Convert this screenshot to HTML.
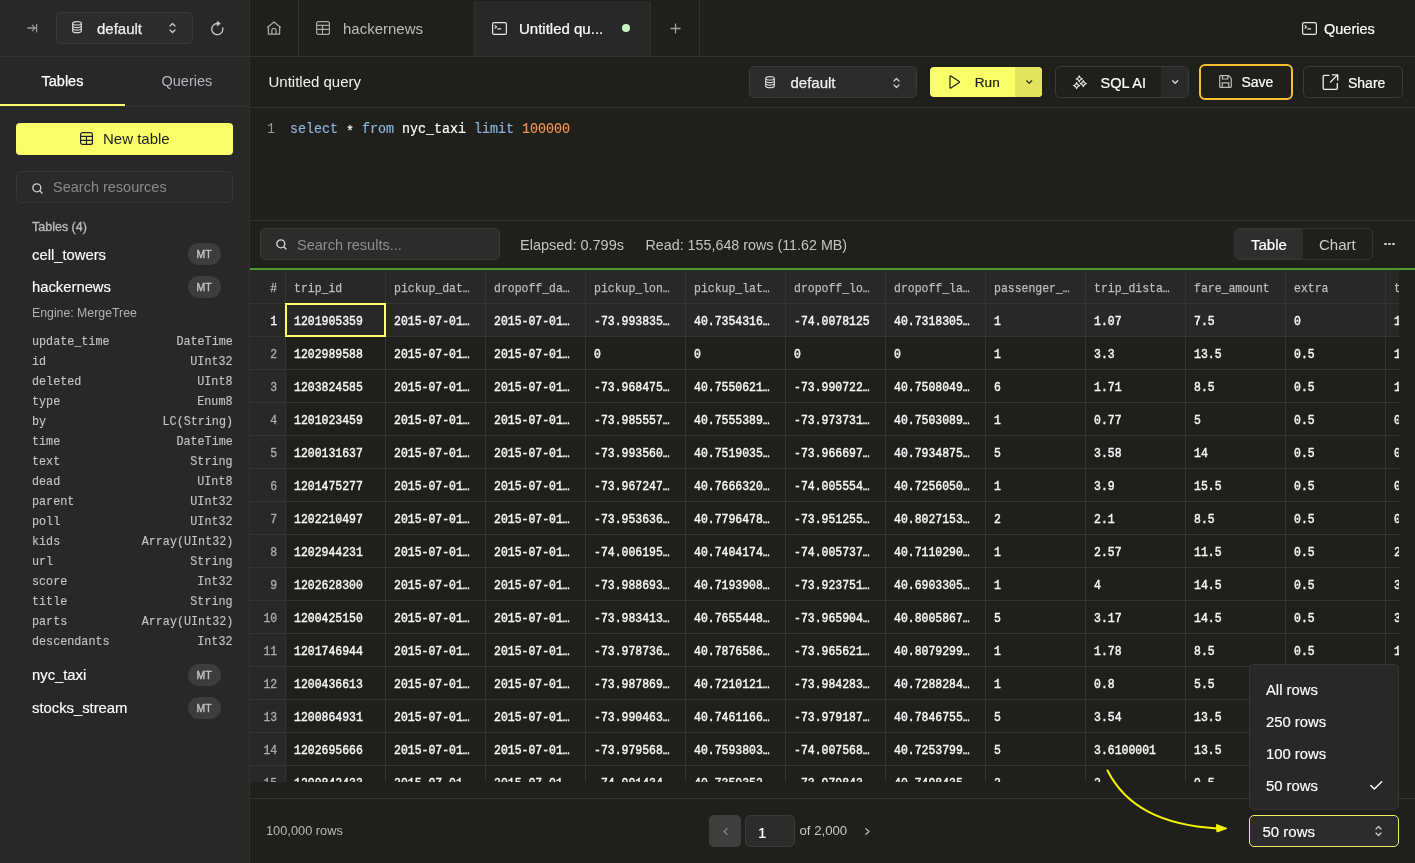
<!DOCTYPE html>
<html><head><meta charset="utf-8">
<style>
*{box-sizing:border-box;margin:0;padding:0}
html,body{width:1415px;height:863px;overflow:hidden;background:#1f1f1c;font-family:"Liberation Sans",sans-serif;color:#fff;position:relative}
.a{position:absolute}
.t{position:absolute;white-space:nowrap;line-height:1;-webkit-font-smoothing:antialiased}
svg{position:absolute;overflow:visible}
</style></head><body>
<div id="root" style="position:absolute;left:0;top:0;width:1415px;height:863px;overflow:hidden;background:#1f1f1c;will-change:transform">
<div class="a" style="left:0px;top:0px;width:250px;height:863px;background:#282828"></div><div class="a" style="left:249px;top:0px;width:1px;height:863px;background:#323232"></div><div class="a" style="left:0px;top:56px;width:249px;height:1px;background:#323232"></div><svg style="left:27px;top:24px;" width="11" height="9" viewBox="0 0 11 9" fill="none"><path d="M0.8 4H8" stroke="#9a9a9a" stroke-width="1.5" stroke-linecap="round"/><path d="M5.3 1.2L8.1 4L5.3 6.8M9.6 0.4V8" stroke="#9a9a9a" stroke-width="1.2" stroke-linecap="round" stroke-linejoin="round"/></svg><div class="a" style="left:56px;top:12px;width:137px;height:32px;background:#2c2c2c;border:1px solid #3a3a3a;border-radius:5px"></div><svg style="left:72px;top:21px;" width="10" height="12" viewBox="0 0 10 12" fill="none"><path d="M0.7 2.4C0.7 1.3 2.6 0.7 5 0.7C7.4 0.7 9.3 1.3 9.3 2.4V9.9C9.3 11 7.4 11.6 5 11.6C2.6 11.6 0.7 11 0.7 9.9Z" stroke="#d8d8d8" stroke-width="1.2"/><path d="M0.7 2.4C0.7 3.4 2.6 4 5 4C7.4 4 9.3 3.4 9.3 2.4M0.7 5C0.7 6 2.6 6.6 5 6.6C7.4 6.6 9.3 6 9.3 5M0.7 7.5C0.7 8.5 2.6 9.1 5 9.1C7.4 9.1 9.3 8.5 9.3 7.5" stroke="#d8d8d8" stroke-width="1.1"/></svg><div class="t" style="left:97px;top:21.25px;font-size:15px;color:#f0f0f0;font-weight:400;font-family:'Liberation Sans',sans-serif;-webkit-text-stroke:0.25px #f0f0f0;">default</div><svg style="left:168.5px;top:22px;" width="7" height="12" viewBox="0 0 7 12" fill="none"><path d="M1 4L3.5 1.5L6 4M1 8L3.5 10.5L6 8" stroke="#cfcfcf" stroke-width="1.2" stroke-linecap="round" stroke-linejoin="round"/></svg><svg style="left:211px;top:21px;" width="13" height="14" viewBox="0 0 13 14" fill="none"><path d="M11.8 7A5.6 5.6 0 1 1 6.6 2.5" stroke="#cfcfcf" stroke-width="1.3" stroke-linecap="round"/><path d="M6.3 0.2L9.3 2.6L6.3 5Z" fill="#cfcfcf" stroke="#cfcfcf" stroke-width="0.6" stroke-linejoin="round"/></svg><div class="t" style="left:41.5px;top:73.67px;font-size:14.5px;color:#ffffff;font-weight:400;font-family:'Liberation Sans',sans-serif;-webkit-text-stroke:0.25px #fff;">Tables</div><div class="t" style="left:161.5px;top:73.67px;font-size:14.5px;color:#b3b6bd;font-weight:400;font-family:'Liberation Sans',sans-serif;">Queries</div><div class="a" style="left:0px;top:106px;width:249px;height:1px;background:#323232"></div><div class="a" style="left:0px;top:104px;width:125px;height:2px;background:#faff69"></div><div class="a" style="left:16px;top:123px;width:217px;height:32px;background:#faff69;border-radius:4px"></div><svg style="left:80px;top:132px;" width="13" height="13" viewBox="0 0 13 13" fill="none"><rect x="0.6" y="0.6" width="11.8" height="11.8" rx="2" stroke="#1f1f1c" stroke-width="1.2"/><path d="M0.6 4.4H12.4M0.6 8.4H12.4M6.5 4.4V12.4" stroke="#1f1f1c" stroke-width="1.2"/></svg><div class="t" style="left:103px;top:131.25px;font-size:15px;color:#1f1f1c;font-weight:400;font-family:'Liberation Sans',sans-serif;">New table</div><div class="a" style="left:16px;top:171px;width:217px;height:32px;background:#2a2a2a;border:1px solid #363636;border-radius:5px"></div><svg style="left:31.5px;top:182.5px;" width="11" height="11" viewBox="0 0 11 11" fill="none"><circle cx="4.8" cy="4.8" r="4" stroke="#d0d0d0" stroke-width="1.3"/><path d="M7.8 7.8L10 10" stroke="#d0d0d0" stroke-width="1.3" stroke-linecap="round"/></svg><div class="t" style="left:53px;top:180.18px;font-size:14.5px;color:#8a8a8a;font-weight:400;font-family:'Liberation Sans',sans-serif;">Search resources</div><div class="t" style="left:32px;top:221.38px;font-size:12.5px;color:#b9b9b9;font-weight:400;font-family:'Liberation Sans',sans-serif;-webkit-text-stroke:0.35px #b9b9b9;">Tables (4)</div><div class="t" style="left:32px;top:247.92px;font-size:14.8px;color:#fff;font-weight:400;font-family:'Liberation Sans',sans-serif;-webkit-text-stroke:0.15px #fff;">cell_towers</div><div class="a" style="left:188px;top:243px;width:33px;height:22px;background:#3d3d3d;border-radius:11px"></div><div class="t" style="left:196.5px;top:249.07px;font-size:10.5px;color:#c4c4c4;font-weight:400;font-family:'Liberation Sans',sans-serif;-webkit-text-stroke:0.35px #c4c4c4;">MT</div><div class="t" style="left:32px;top:280.42px;font-size:14.8px;color:#fff;font-weight:400;font-family:'Liberation Sans',sans-serif;-webkit-text-stroke:0.15px #fff;">hackernews</div><div class="a" style="left:188px;top:276px;width:33px;height:22px;background:#3d3d3d;border-radius:11px"></div><div class="t" style="left:196.5px;top:282.07px;font-size:10.5px;color:#c4c4c4;font-weight:400;font-family:'Liberation Sans',sans-serif;-webkit-text-stroke:0.35px #c4c4c4;">MT</div><div class="t" style="left:32px;top:306.55px;font-size:12.3px;color:#b3b3b3;font-weight:400;font-family:'Liberation Sans',sans-serif;">Engine: MergeTree</div><div class="t" style="left:32px;transform-origin:left top;top:334.74px;font-size:13.5px;color:#c4c4c4;font-family:'Liberation Mono',monospace;font-weight:400;transform:scaleX(0.87);-webkit-text-stroke:0.15px #c4c4c4;">update_time</div><div class="t" style="right:1182px;transform-origin:right top;top:334.74px;font-size:13.5px;color:#c4c4c4;font-family:'Liberation Mono',monospace;font-weight:400;transform:scaleX(0.87);-webkit-text-stroke:0.15px #c4c4c4;">DateTime</div><div class="t" style="left:32px;transform-origin:left top;top:354.74px;font-size:13.5px;color:#c4c4c4;font-family:'Liberation Mono',monospace;font-weight:400;transform:scaleX(0.87);-webkit-text-stroke:0.15px #c4c4c4;">id</div><div class="t" style="right:1182px;transform-origin:right top;top:354.74px;font-size:13.5px;color:#c4c4c4;font-family:'Liberation Mono',monospace;font-weight:400;transform:scaleX(0.87);-webkit-text-stroke:0.15px #c4c4c4;">UInt32</div><div class="t" style="left:32px;transform-origin:left top;top:374.74px;font-size:13.5px;color:#c4c4c4;font-family:'Liberation Mono',monospace;font-weight:400;transform:scaleX(0.87);-webkit-text-stroke:0.15px #c4c4c4;">deleted</div><div class="t" style="right:1182px;transform-origin:right top;top:374.74px;font-size:13.5px;color:#c4c4c4;font-family:'Liberation Mono',monospace;font-weight:400;transform:scaleX(0.87);-webkit-text-stroke:0.15px #c4c4c4;">UInt8</div><div class="t" style="left:32px;transform-origin:left top;top:394.74px;font-size:13.5px;color:#c4c4c4;font-family:'Liberation Mono',monospace;font-weight:400;transform:scaleX(0.87);-webkit-text-stroke:0.15px #c4c4c4;">type</div><div class="t" style="right:1182px;transform-origin:right top;top:394.74px;font-size:13.5px;color:#c4c4c4;font-family:'Liberation Mono',monospace;font-weight:400;transform:scaleX(0.87);-webkit-text-stroke:0.15px #c4c4c4;">Enum8</div><div class="t" style="left:32px;transform-origin:left top;top:414.74px;font-size:13.5px;color:#c4c4c4;font-family:'Liberation Mono',monospace;font-weight:400;transform:scaleX(0.87);-webkit-text-stroke:0.15px #c4c4c4;">by</div><div class="t" style="right:1182px;transform-origin:right top;top:414.74px;font-size:13.5px;color:#c4c4c4;font-family:'Liberation Mono',monospace;font-weight:400;transform:scaleX(0.87);-webkit-text-stroke:0.15px #c4c4c4;">LC(String)</div><div class="t" style="left:32px;transform-origin:left top;top:434.74px;font-size:13.5px;color:#c4c4c4;font-family:'Liberation Mono',monospace;font-weight:400;transform:scaleX(0.87);-webkit-text-stroke:0.15px #c4c4c4;">time</div><div class="t" style="right:1182px;transform-origin:right top;top:434.74px;font-size:13.5px;color:#c4c4c4;font-family:'Liberation Mono',monospace;font-weight:400;transform:scaleX(0.87);-webkit-text-stroke:0.15px #c4c4c4;">DateTime</div><div class="t" style="left:32px;transform-origin:left top;top:454.74px;font-size:13.5px;color:#c4c4c4;font-family:'Liberation Mono',monospace;font-weight:400;transform:scaleX(0.87);-webkit-text-stroke:0.15px #c4c4c4;">text</div><div class="t" style="right:1182px;transform-origin:right top;top:454.74px;font-size:13.5px;color:#c4c4c4;font-family:'Liberation Mono',monospace;font-weight:400;transform:scaleX(0.87);-webkit-text-stroke:0.15px #c4c4c4;">String</div><div class="t" style="left:32px;transform-origin:left top;top:474.74px;font-size:13.5px;color:#c4c4c4;font-family:'Liberation Mono',monospace;font-weight:400;transform:scaleX(0.87);-webkit-text-stroke:0.15px #c4c4c4;">dead</div><div class="t" style="right:1182px;transform-origin:right top;top:474.74px;font-size:13.5px;color:#c4c4c4;font-family:'Liberation Mono',monospace;font-weight:400;transform:scaleX(0.87);-webkit-text-stroke:0.15px #c4c4c4;">UInt8</div><div class="t" style="left:32px;transform-origin:left top;top:494.74px;font-size:13.5px;color:#c4c4c4;font-family:'Liberation Mono',monospace;font-weight:400;transform:scaleX(0.87);-webkit-text-stroke:0.15px #c4c4c4;">parent</div><div class="t" style="right:1182px;transform-origin:right top;top:494.74px;font-size:13.5px;color:#c4c4c4;font-family:'Liberation Mono',monospace;font-weight:400;transform:scaleX(0.87);-webkit-text-stroke:0.15px #c4c4c4;">UInt32</div><div class="t" style="left:32px;transform-origin:left top;top:514.74px;font-size:13.5px;color:#c4c4c4;font-family:'Liberation Mono',monospace;font-weight:400;transform:scaleX(0.87);-webkit-text-stroke:0.15px #c4c4c4;">poll</div><div class="t" style="right:1182px;transform-origin:right top;top:514.74px;font-size:13.5px;color:#c4c4c4;font-family:'Liberation Mono',monospace;font-weight:400;transform:scaleX(0.87);-webkit-text-stroke:0.15px #c4c4c4;">UInt32</div><div class="t" style="left:32px;transform-origin:left top;top:534.74px;font-size:13.5px;color:#c4c4c4;font-family:'Liberation Mono',monospace;font-weight:400;transform:scaleX(0.87);-webkit-text-stroke:0.15px #c4c4c4;">kids</div><div class="t" style="right:1182px;transform-origin:right top;top:534.74px;font-size:13.5px;color:#c4c4c4;font-family:'Liberation Mono',monospace;font-weight:400;transform:scaleX(0.87);-webkit-text-stroke:0.15px #c4c4c4;">Array(UInt32)</div><div class="t" style="left:32px;transform-origin:left top;top:554.74px;font-size:13.5px;color:#c4c4c4;font-family:'Liberation Mono',monospace;font-weight:400;transform:scaleX(0.87);-webkit-text-stroke:0.15px #c4c4c4;">url</div><div class="t" style="right:1182px;transform-origin:right top;top:554.74px;font-size:13.5px;color:#c4c4c4;font-family:'Liberation Mono',monospace;font-weight:400;transform:scaleX(0.87);-webkit-text-stroke:0.15px #c4c4c4;">String</div><div class="t" style="left:32px;transform-origin:left top;top:574.74px;font-size:13.5px;color:#c4c4c4;font-family:'Liberation Mono',monospace;font-weight:400;transform:scaleX(0.87);-webkit-text-stroke:0.15px #c4c4c4;">score</div><div class="t" style="right:1182px;transform-origin:right top;top:574.74px;font-size:13.5px;color:#c4c4c4;font-family:'Liberation Mono',monospace;font-weight:400;transform:scaleX(0.87);-webkit-text-stroke:0.15px #c4c4c4;">Int32</div><div class="t" style="left:32px;transform-origin:left top;top:594.74px;font-size:13.5px;color:#c4c4c4;font-family:'Liberation Mono',monospace;font-weight:400;transform:scaleX(0.87);-webkit-text-stroke:0.15px #c4c4c4;">title</div><div class="t" style="right:1182px;transform-origin:right top;top:594.74px;font-size:13.5px;color:#c4c4c4;font-family:'Liberation Mono',monospace;font-weight:400;transform:scaleX(0.87);-webkit-text-stroke:0.15px #c4c4c4;">String</div><div class="t" style="left:32px;transform-origin:left top;top:614.74px;font-size:13.5px;color:#c4c4c4;font-family:'Liberation Mono',monospace;font-weight:400;transform:scaleX(0.87);-webkit-text-stroke:0.15px #c4c4c4;">parts</div><div class="t" style="right:1182px;transform-origin:right top;top:614.74px;font-size:13.5px;color:#c4c4c4;font-family:'Liberation Mono',monospace;font-weight:400;transform:scaleX(0.87);-webkit-text-stroke:0.15px #c4c4c4;">Array(UInt32)</div><div class="t" style="left:32px;transform-origin:left top;top:634.74px;font-size:13.5px;color:#c4c4c4;font-family:'Liberation Mono',monospace;font-weight:400;transform:scaleX(0.87);-webkit-text-stroke:0.15px #c4c4c4;">descendants</div><div class="t" style="right:1182px;transform-origin:right top;top:634.74px;font-size:13.5px;color:#c4c4c4;font-family:'Liberation Mono',monospace;font-weight:400;transform:scaleX(0.87);-webkit-text-stroke:0.15px #c4c4c4;">Int32</div><div class="t" style="left:32px;top:668.42px;font-size:14.8px;color:#fff;font-weight:400;font-family:'Liberation Sans',sans-serif;-webkit-text-stroke:0.15px #fff;">nyc_taxi</div><div class="a" style="left:188px;top:664px;width:33px;height:22px;background:#3d3d3d;border-radius:11px"></div><div class="t" style="left:196.5px;top:670.08px;font-size:10.5px;color:#c4c4c4;font-weight:400;font-family:'Liberation Sans',sans-serif;-webkit-text-stroke:0.35px #c4c4c4;">MT</div><div class="t" style="left:32px;top:701.42px;font-size:14.8px;color:#fff;font-weight:400;font-family:'Liberation Sans',sans-serif;-webkit-text-stroke:0.15px #fff;">stocks_stream</div><div class="a" style="left:188px;top:697px;width:33px;height:22px;background:#3d3d3d;border-radius:11px"></div><div class="t" style="left:196.5px;top:703.08px;font-size:10.5px;color:#c4c4c4;font-weight:400;font-family:'Liberation Sans',sans-serif;-webkit-text-stroke:0.35px #c4c4c4;">MT</div><div class="a" style="left:250px;top:56px;width:1165px;height:1px;background:#323232"></div><div class="a" style="left:298px;top:0px;width:1px;height:56px;background:#323232"></div><div class="a" style="left:475px;top:1px;width:175px;height:55px;background:#282828"></div><div class="a" style="left:474px;top:1px;width:1px;height:55px;background:#323232"></div><div class="a" style="left:650px;top:1px;width:1px;height:55px;background:#323232"></div><div class="a" style="left:699px;top:0px;width:1px;height:56px;background:#323232"></div><svg style="left:267px;top:21px;" width="14" height="14" viewBox="0 0 14 14" fill="none"><path d="M0.6 6.2L7 0.9L13.4 6.2M1.4 5.6V13.2H12.6V5.6" stroke="#a8a8a8" stroke-width="1.3" stroke-linecap="round" stroke-linejoin="round"/><path d="M4.9 13.2V9.4A2.1 2.1 0 0 1 9.1 9.4V13.2" stroke="#a8a8a8" stroke-width="1.3"/></svg><svg style="left:316px;top:21px;" width="14" height="14" viewBox="0 0 14 14" fill="none"><rect x="0.6" y="0.6" width="12.8" height="12.8" rx="2" stroke="#a8a8a8" stroke-width="1.2"/><path d="M0.6 4.4H13.4M0.6 8.4H13.4M6.5 4.4V13.4" stroke="#a8a8a8" stroke-width="1.2"/></svg><div class="t" style="left:343px;top:21.25px;font-size:15px;color:#bdbdbd;font-weight:400;font-family:'Liberation Sans',sans-serif;">hackernews</div><svg style="left:491.5px;top:21.5px;" width="15" height="13" viewBox="0 0 15 13" fill="none"><rect x="0.6" y="0.6" width="13.8" height="11.8" rx="1.6" stroke="#e8e8e8" stroke-width="1.2"/><path d="M3 3.6L4.6 4.9L3 6.2M5.8 6.9H8.6" stroke="#e8e8e8" stroke-width="1.1" stroke-linecap="round" stroke-linejoin="round"/></svg><div class="t" style="left:519px;top:21.25px;font-size:15px;color:#ffffff;font-weight:400;font-family:'Liberation Sans',sans-serif;-webkit-text-stroke:0.2px #fff;">Untitled qu...</div><div class="a" style="left:621.75px;top:23.75px;width:8.5px;height:8.5px;border-radius:50%;background:#c6f6c6"></div><svg style="left:669.5px;top:22.5px;" width="11" height="11" viewBox="0 0 11 11" fill="none"><path d="M5.5 0.5V10.5M0.5 5.5H10.5" stroke="#a0a0a0" stroke-width="1.3"/></svg><svg style="left:1301.5px;top:21.5px;" width="15" height="13" viewBox="0 0 15 13" fill="none"><rect x="0.6" y="0.6" width="13.8" height="11.8" rx="1.6" stroke="#e8e8e8" stroke-width="1.2"/><path d="M3 3.6L4.6 4.9L3 6.2M5.8 6.9H8.6" stroke="#e8e8e8" stroke-width="1.1" stroke-linecap="round" stroke-linejoin="round"/></svg><div class="t" style="left:1324px;top:21.68px;font-size:14.5px;color:#ffffff;font-weight:400;font-family:'Liberation Sans',sans-serif;-webkit-text-stroke:0.2px #fff;">Queries</div><div class="a" style="left:250px;top:107px;width:1165px;height:1px;background:#323232"></div><div class="t" style="left:268.5px;top:74.25px;font-size:15px;color:#f2f2f2;font-weight:400;font-family:'Liberation Sans',sans-serif;">Untitled query</div><div class="a" style="left:749px;top:66px;width:168px;height:32px;background:#2c2c2c;border:1px solid #3a3a3a;border-radius:5px"></div><svg style="left:765px;top:75.5px;" width="10" height="12" viewBox="0 0 10 12" fill="none"><path d="M0.7 2.4C0.7 1.3 2.6 0.7 5 0.7C7.4 0.7 9.3 1.3 9.3 2.4V9.9C9.3 11 7.4 11.6 5 11.6C2.6 11.6 0.7 11 0.7 9.9Z" stroke="#d8d8d8" stroke-width="1.2"/><path d="M0.7 2.4C0.7 3.4 2.6 4 5 4C7.4 4 9.3 3.4 9.3 2.4M0.7 5C0.7 6 2.6 6.6 5 6.6C7.4 6.6 9.3 6 9.3 5M0.7 7.5C0.7 8.5 2.6 9.1 5 9.1C7.4 9.1 9.3 8.5 9.3 7.5" stroke="#d8d8d8" stroke-width="1.1"/></svg><div class="t" style="left:790.5px;top:75.25px;font-size:15px;color:#f0f0f0;font-weight:400;font-family:'Liberation Sans',sans-serif;-webkit-text-stroke:0.25px #f0f0f0;">default</div><svg style="left:892.5px;top:76.5px;" width="7" height="12" viewBox="0 0 7 12" fill="none"><path d="M1 4L3.5 1.5L6 4M1 8L3.5 10.5L6 8" stroke="#cfcfcf" stroke-width="1.2" stroke-linecap="round" stroke-linejoin="round"/></svg><div class="a" style="left:930px;top:67px;width:112px;height:30px;background:#faff69;border-radius:4px"></div><div class="a" style="left:1015px;top:67px;width:27px;height:30px;background:#e2e45e;border-top-right-radius:4px;border-bottom-right-radius:4px"></div><svg style="left:949px;top:75px;" width="11" height="14" viewBox="0 0 11 14" fill="none"><path d="M1 1.6V12.4C1 12.9 1.5 13.2 1.9 12.9L10.2 7.5C10.6 7.2 10.6 6.8 10.2 6.5L1.9 1.1C1.5 0.8 1 1.1 1 1.6Z" stroke="#1f1f1c" stroke-width="1.2" stroke-linejoin="round"/></svg><div class="t" style="left:974.8px;top:76.44px;font-size:13.6px;color:#1f1f1c;font-weight:400;font-family:'Liberation Sans',sans-serif;-webkit-text-stroke:0.2px #1f1f1c;">Run</div><svg style="left:1026px;top:80px;" width="6.4" height="4" viewBox="0 0 6.4 4" fill="none"><path d="M0.7 0.7L3.2 3.2L5.7 0.7" stroke="#3a3a20" stroke-width="1.3" stroke-linecap="round" stroke-linejoin="round"/></svg><div class="a" style="left:1055px;top:66px;width:134px;height:32px;border:1px solid #3a3a3a;border-radius:5px;overflow:hidden"></div><div class="a" style="left:1161px;top:67px;width:27px;height:30px;background:#2a2a2a;border-top-right-radius:4px;border-bottom-right-radius:4px"></div><svg style="left:1074px;top:75.5px;" width="12" height="12" viewBox="0 0 12 12" fill="none"><path d="M5.30 -0.10Q5.77 2.43 8.30 2.90Q5.77 3.37 5.30 5.90Q4.83 3.37 2.30 2.90Q4.83 2.43 5.30 -0.10ZM9.30 4.70Q9.77 7.23 12.30 7.70Q9.77 8.17 9.30 10.70Q8.83 8.17 6.30 7.70Q8.83 7.23 9.30 4.70ZM2.60 6.70Q3.07 9.23 5.60 9.70Q3.07 10.17 2.60 12.70Q2.13 10.17 -0.40 9.70Q2.13 9.23 2.60 6.70Z" stroke="#e8e8e8" stroke-width="1.2" stroke-linejoin="round"/></svg><div class="t" style="left:1100.5px;top:75.67px;font-size:14.5px;color:#ffffff;font-weight:400;font-family:'Liberation Sans',sans-serif;-webkit-text-stroke:0.2px #fff;">SQL AI</div><svg style="left:1172px;top:80px;" width="6.4" height="4" viewBox="0 0 6.4 4" fill="none"><path d="M0.7 0.7L3.2 3.2L5.7 0.7" stroke="#d8d8d8" stroke-width="1.3" stroke-linecap="round" stroke-linejoin="round"/></svg><div class="a" style="left:1199px;top:64px;width:94px;height:36px;border:2px solid #f5c02e;border-radius:6px"></div><svg style="left:1219px;top:75px;" width="13" height="13" viewBox="0 0 13 13" fill="none"><path d="M1.4 0.7H9.6L12.3 3.4V11.6C12.3 12 12 12.3 11.6 12.3H1.4C1 12.3 0.7 12 0.7 11.6V1.4C0.7 1 1 0.7 1.4 0.7Z" stroke="#bdbdbd" stroke-width="1.2"/><path d="M3.5 0.7V4H8.8V0.7M3.2 12.3V7.8H9.8V12.3" stroke="#bdbdbd" stroke-width="1.2"/></svg><div class="t" style="left:1241.5px;top:75.10px;font-size:14px;color:#ffffff;font-weight:400;font-family:'Liberation Sans',sans-serif;-webkit-text-stroke:0.2px #fff;">Save</div><div class="a" style="left:1303px;top:66px;width:100px;height:32px;border:1px solid #3a3a3a;border-radius:5px"></div><svg style="left:1321.5px;top:73.5px;" width="17" height="16.5" viewBox="0 0 17 16.5" fill="none"><path d="M7 1.3H2.3C1.7 1.3 1.2 1.8 1.2 2.4V14.2C1.2 14.8 1.7 15.3 2.3 15.3H14.2C14.8 15.3 15.3 14.8 15.3 14.2V9.5M8.5 8L15.6 0.9M10.3 0.8H15.7V6.2" stroke="#f0f0f0" stroke-width="1.3" stroke-linecap="round" stroke-linejoin="round"/></svg><div class="t" style="left:1348px;top:76.10px;font-size:14px;color:#ffffff;font-weight:400;font-family:'Liberation Sans',sans-serif;-webkit-text-stroke:0.2px #fff;">Share</div><div class="a" style="left:250px;top:220px;width:1165px;height:1px;background:#323232"></div><div class="t" style="left:266.5px;transform-origin:left top;top:122.22px;font-size:15.5px;color:#9a9a9a;font-family:'Liberation Mono',monospace;font-weight:400;transform:scaleX(0.86);">1</div><div class="t" style="left:290px;transform-origin:left top;top:122.22px;font-size:15.5px;color:#fff;font-family:'Liberation Mono',monospace;font-weight:400;transform:scaleX(0.86);-webkit-text-stroke:0.2px currentColor;"><span style="color:#8cb4dc">select</span> <span style="color:#fff;position:relative;top:2.5px">*</span> <span style="color:#8cb4dc">from</span> <span style="color:#fff">nyc_taxi</span> <span style="color:#8cb4dc">limit</span> <span style="color:#f0914a">100000</span></div><div class="a" style="left:260px;top:228px;width:240px;height:32px;background:#2c2c2c;border:1px solid #383838;border-radius:5px"></div><svg style="left:275.5px;top:238.5px;" width="11" height="11" viewBox="0 0 11 11" fill="none"><circle cx="4.8" cy="4.8" r="4" stroke="#d8d8d8" stroke-width="1.3"/><path d="M7.8 7.8L10 10" stroke="#d8d8d8" stroke-width="1.3" stroke-linecap="round"/></svg><div class="t" style="left:297px;top:238.18px;font-size:14.5px;color:#8e8e8e;font-weight:400;font-family:'Liberation Sans',sans-serif;">Search results...</div><div class="t" style="left:520px;top:238.18px;font-size:14.5px;color:#c4c4c4;font-weight:400;font-family:'Liberation Sans',sans-serif;">Elapsed: 0.799s</div><div class="t" style="left:645.5px;top:238.34px;font-size:14.3px;color:#c4c4c4;font-weight:400;font-family:'Liberation Sans',sans-serif;">Read: 155,648 rows (11.62 MB)</div><div class="a" style="left:1234px;top:228px;width:139px;height:32px;border:1px solid #333;border-radius:5px"></div><div class="a" style="left:1235px;top:229px;width:68px;height:30px;background:#2e2e2e;border-top-left-radius:4px;border-bottom-left-radius:4px"></div><div class="t" style="left:1251px;top:237.25px;font-size:15px;color:#fff;font-weight:400;font-family:'Liberation Sans',sans-serif;-webkit-text-stroke:0.2px #fff;">Table</div><div class="t" style="left:1319px;top:237.25px;font-size:15px;color:#cfcfcf;font-weight:400;font-family:'Liberation Sans',sans-serif;">Chart</div><div class="a" style="left:1384.1px;top:242.6px;width:2.8px;height:2.8px;border-radius:50%;background:#d0d0d0"></div><div class="a" style="left:1388.1px;top:242.6px;width:2.8px;height:2.8px;border-radius:50%;background:#d0d0d0"></div><div class="a" style="left:1392.1px;top:242.6px;width:2.8px;height:2.8px;border-radius:50%;background:#d0d0d0"></div><div class="a" style="left:250px;top:268px;width:1165px;height:2px;background:#4f9a2e"></div><div class="a" style="left:250px;top:270px;width:1149px;height:512px;overflow:hidden"><div class="a" style="left:0px;top:0px;width:1149px;height:34px;background:#282828"></div><div class="a" style="left:0px;top:33px;width:35px;height:479px;background:#282828"></div><div class="a" style="left:35px;top:33px;width:1114px;height:33px;background:#282828"></div><div class="a" style="left:0px;top:33px;width:1149px;height:1px;background:#343434"></div><div class="a" style="left:0px;top:66px;width:1149px;height:1px;background:#343434"></div><div class="a" style="left:0px;top:99px;width:1149px;height:1px;background:#343434"></div><div class="a" style="left:0px;top:132px;width:1149px;height:1px;background:#343434"></div><div class="a" style="left:0px;top:165px;width:1149px;height:1px;background:#343434"></div><div class="a" style="left:0px;top:198px;width:1149px;height:1px;background:#343434"></div><div class="a" style="left:0px;top:231px;width:1149px;height:1px;background:#343434"></div><div class="a" style="left:0px;top:264px;width:1149px;height:1px;background:#343434"></div><div class="a" style="left:0px;top:297px;width:1149px;height:1px;background:#343434"></div><div class="a" style="left:0px;top:330px;width:1149px;height:1px;background:#343434"></div><div class="a" style="left:0px;top:363px;width:1149px;height:1px;background:#343434"></div><div class="a" style="left:0px;top:396px;width:1149px;height:1px;background:#343434"></div><div class="a" style="left:0px;top:429px;width:1149px;height:1px;background:#343434"></div><div class="a" style="left:0px;top:462px;width:1149px;height:1px;background:#343434"></div><div class="a" style="left:0px;top:495px;width:1149px;height:1px;background:#343434"></div><div class="a" style="left:0px;top:528px;width:1149px;height:1px;background:#343434"></div><div class="a" style="left:35px;top:0px;width:1px;height:512px;background:#343434"></div><div class="a" style="left:135px;top:0px;width:1px;height:512px;background:#343434"></div><div class="a" style="left:235px;top:0px;width:1px;height:512px;background:#343434"></div><div class="a" style="left:335px;top:0px;width:1px;height:512px;background:#343434"></div><div class="a" style="left:435px;top:0px;width:1px;height:512px;background:#343434"></div><div class="a" style="left:535px;top:0px;width:1px;height:512px;background:#343434"></div><div class="a" style="left:635px;top:0px;width:1px;height:512px;background:#343434"></div><div class="a" style="left:735px;top:0px;width:1px;height:512px;background:#343434"></div><div class="a" style="left:835px;top:0px;width:1px;height:512px;background:#343434"></div><div class="a" style="left:935px;top:0px;width:1px;height:512px;background:#343434"></div><div class="a" style="left:1035px;top:0px;width:1px;height:512px;background:#343434"></div><div class="a" style="left:1135px;top:0px;width:1px;height:512px;background:#343434"></div><div class="t" style="right:1121.5px;transform-origin:right top;top:11.74px;font-size:13.5px;color:#b3b6bd;font-family:'Liberation Mono',monospace;font-weight:400;transform:scaleX(0.85);-webkit-text-stroke:0.35px #b3b6bd;">#</div><div class="t" style="left:44px;transform-origin:left top;top:11.74px;font-size:13.5px;color:#bcbfc4;font-family:'Liberation Mono',monospace;font-weight:400;transform:scaleX(0.85);-webkit-text-stroke:0.25px #bcbfc4;">trip_id</div><div class="t" style="left:144px;transform-origin:left top;top:11.74px;font-size:13.5px;color:#bcbfc4;font-family:'Liberation Mono',monospace;font-weight:400;transform:scaleX(0.85);-webkit-text-stroke:0.25px #bcbfc4;">pickup_dat…</div><div class="t" style="left:244px;transform-origin:left top;top:11.74px;font-size:13.5px;color:#bcbfc4;font-family:'Liberation Mono',monospace;font-weight:400;transform:scaleX(0.85);-webkit-text-stroke:0.25px #bcbfc4;">dropoff_da…</div><div class="t" style="left:344px;transform-origin:left top;top:11.74px;font-size:13.5px;color:#bcbfc4;font-family:'Liberation Mono',monospace;font-weight:400;transform:scaleX(0.85);-webkit-text-stroke:0.25px #bcbfc4;">pickup_lon…</div><div class="t" style="left:444px;transform-origin:left top;top:11.74px;font-size:13.5px;color:#bcbfc4;font-family:'Liberation Mono',monospace;font-weight:400;transform:scaleX(0.85);-webkit-text-stroke:0.25px #bcbfc4;">pickup_lat…</div><div class="t" style="left:544px;transform-origin:left top;top:11.74px;font-size:13.5px;color:#bcbfc4;font-family:'Liberation Mono',monospace;font-weight:400;transform:scaleX(0.85);-webkit-text-stroke:0.25px #bcbfc4;">dropoff_lo…</div><div class="t" style="left:644px;transform-origin:left top;top:11.74px;font-size:13.5px;color:#bcbfc4;font-family:'Liberation Mono',monospace;font-weight:400;transform:scaleX(0.85);-webkit-text-stroke:0.25px #bcbfc4;">dropoff_la…</div><div class="t" style="left:744px;transform-origin:left top;top:11.74px;font-size:13.5px;color:#bcbfc4;font-family:'Liberation Mono',monospace;font-weight:400;transform:scaleX(0.85);-webkit-text-stroke:0.25px #bcbfc4;">passenger_…</div><div class="t" style="left:844px;transform-origin:left top;top:11.74px;font-size:13.5px;color:#bcbfc4;font-family:'Liberation Mono',monospace;font-weight:400;transform:scaleX(0.85);-webkit-text-stroke:0.25px #bcbfc4;">trip_dista…</div><div class="t" style="left:944px;transform-origin:left top;top:11.74px;font-size:13.5px;color:#bcbfc4;font-family:'Liberation Mono',monospace;font-weight:400;transform:scaleX(0.85);-webkit-text-stroke:0.25px #bcbfc4;">fare_amount</div><div class="t" style="left:1044px;transform-origin:left top;top:11.74px;font-size:13.5px;color:#bcbfc4;font-family:'Liberation Mono',monospace;font-weight:400;transform:scaleX(0.85);-webkit-text-stroke:0.25px #bcbfc4;">extra</div><div class="t" style="left:1144px;transform-origin:left top;top:11.74px;font-size:13.5px;color:#bcbfc4;font-family:'Liberation Mono',monospace;font-weight:400;transform:scaleX(0.85);-webkit-text-stroke:0.25px #bcbfc4;">tip_amount</div><div class="t" style="right:1121.5px;transform-origin:right top;top:44.74px;font-size:13.5px;color:#fff;font-family:'Liberation Mono',monospace;font-weight:400;transform:scaleX(0.85);-webkit-text-stroke:0.35px currentColor;">1</div><div class="t" style="left:44px;transform-origin:left top;top:44.74px;font-size:13.5px;color:#f8f8f8;font-family:'Liberation Mono',monospace;font-weight:400;transform:scaleX(0.85);-webkit-text-stroke:0.45px #f8f8f8;">1201905359</div><div class="t" style="left:144px;transform-origin:left top;top:44.74px;font-size:13.5px;color:#f8f8f8;font-family:'Liberation Mono',monospace;font-weight:400;transform:scaleX(0.85);-webkit-text-stroke:0.45px #f8f8f8;">2015-07-01…</div><div class="t" style="left:244px;transform-origin:left top;top:44.74px;font-size:13.5px;color:#f8f8f8;font-family:'Liberation Mono',monospace;font-weight:400;transform:scaleX(0.85);-webkit-text-stroke:0.45px #f8f8f8;">2015-07-01…</div><div class="t" style="left:344px;transform-origin:left top;top:44.74px;font-size:13.5px;color:#f8f8f8;font-family:'Liberation Mono',monospace;font-weight:400;transform:scaleX(0.85);-webkit-text-stroke:0.45px #f8f8f8;">-73.993835…</div><div class="t" style="left:444px;transform-origin:left top;top:44.74px;font-size:13.5px;color:#f8f8f8;font-family:'Liberation Mono',monospace;font-weight:400;transform:scaleX(0.85);-webkit-text-stroke:0.45px #f8f8f8;">40.7354316…</div><div class="t" style="left:544px;transform-origin:left top;top:44.74px;font-size:13.5px;color:#f8f8f8;font-family:'Liberation Mono',monospace;font-weight:400;transform:scaleX(0.85);-webkit-text-stroke:0.45px #f8f8f8;">-74.0078125</div><div class="t" style="left:644px;transform-origin:left top;top:44.74px;font-size:13.5px;color:#f8f8f8;font-family:'Liberation Mono',monospace;font-weight:400;transform:scaleX(0.85);-webkit-text-stroke:0.45px #f8f8f8;">40.7318305…</div><div class="t" style="left:744px;transform-origin:left top;top:44.74px;font-size:13.5px;color:#f8f8f8;font-family:'Liberation Mono',monospace;font-weight:400;transform:scaleX(0.85);-webkit-text-stroke:0.45px #f8f8f8;">1</div><div class="t" style="left:844px;transform-origin:left top;top:44.74px;font-size:13.5px;color:#f8f8f8;font-family:'Liberation Mono',monospace;font-weight:400;transform:scaleX(0.85);-webkit-text-stroke:0.45px #f8f8f8;">1.07</div><div class="t" style="left:944px;transform-origin:left top;top:44.74px;font-size:13.5px;color:#f8f8f8;font-family:'Liberation Mono',monospace;font-weight:400;transform:scaleX(0.85);-webkit-text-stroke:0.45px #f8f8f8;">7.5</div><div class="t" style="left:1044px;transform-origin:left top;top:44.74px;font-size:13.5px;color:#f8f8f8;font-family:'Liberation Mono',monospace;font-weight:400;transform:scaleX(0.85);-webkit-text-stroke:0.45px #f8f8f8;">0</div><div class="t" style="left:1144px;transform-origin:left top;top:44.74px;font-size:13.5px;color:#f8f8f8;font-family:'Liberation Mono',monospace;font-weight:400;transform:scaleX(0.85);-webkit-text-stroke:0.45px #f8f8f8;">1</div><div class="t" style="right:1121.5px;transform-origin:right top;top:77.74px;font-size:13.5px;color:#a9abb0;font-family:'Liberation Mono',monospace;font-weight:400;transform:scaleX(0.85);-webkit-text-stroke:0.35px currentColor;">2</div><div class="t" style="left:44px;transform-origin:left top;top:77.74px;font-size:13.5px;color:#f8f8f8;font-family:'Liberation Mono',monospace;font-weight:400;transform:scaleX(0.85);-webkit-text-stroke:0.45px #f8f8f8;">1202989588</div><div class="t" style="left:144px;transform-origin:left top;top:77.74px;font-size:13.5px;color:#f8f8f8;font-family:'Liberation Mono',monospace;font-weight:400;transform:scaleX(0.85);-webkit-text-stroke:0.45px #f8f8f8;">2015-07-01…</div><div class="t" style="left:244px;transform-origin:left top;top:77.74px;font-size:13.5px;color:#f8f8f8;font-family:'Liberation Mono',monospace;font-weight:400;transform:scaleX(0.85);-webkit-text-stroke:0.45px #f8f8f8;">2015-07-01…</div><div class="t" style="left:344px;transform-origin:left top;top:77.74px;font-size:13.5px;color:#f8f8f8;font-family:'Liberation Mono',monospace;font-weight:400;transform:scaleX(0.85);-webkit-text-stroke:0.45px #f8f8f8;">0</div><div class="t" style="left:444px;transform-origin:left top;top:77.74px;font-size:13.5px;color:#f8f8f8;font-family:'Liberation Mono',monospace;font-weight:400;transform:scaleX(0.85);-webkit-text-stroke:0.45px #f8f8f8;">0</div><div class="t" style="left:544px;transform-origin:left top;top:77.74px;font-size:13.5px;color:#f8f8f8;font-family:'Liberation Mono',monospace;font-weight:400;transform:scaleX(0.85);-webkit-text-stroke:0.45px #f8f8f8;">0</div><div class="t" style="left:644px;transform-origin:left top;top:77.74px;font-size:13.5px;color:#f8f8f8;font-family:'Liberation Mono',monospace;font-weight:400;transform:scaleX(0.85);-webkit-text-stroke:0.45px #f8f8f8;">0</div><div class="t" style="left:744px;transform-origin:left top;top:77.74px;font-size:13.5px;color:#f8f8f8;font-family:'Liberation Mono',monospace;font-weight:400;transform:scaleX(0.85);-webkit-text-stroke:0.45px #f8f8f8;">1</div><div class="t" style="left:844px;transform-origin:left top;top:77.74px;font-size:13.5px;color:#f8f8f8;font-family:'Liberation Mono',monospace;font-weight:400;transform:scaleX(0.85);-webkit-text-stroke:0.45px #f8f8f8;">3.3</div><div class="t" style="left:944px;transform-origin:left top;top:77.74px;font-size:13.5px;color:#f8f8f8;font-family:'Liberation Mono',monospace;font-weight:400;transform:scaleX(0.85);-webkit-text-stroke:0.45px #f8f8f8;">13.5</div><div class="t" style="left:1044px;transform-origin:left top;top:77.74px;font-size:13.5px;color:#f8f8f8;font-family:'Liberation Mono',monospace;font-weight:400;transform:scaleX(0.85);-webkit-text-stroke:0.45px #f8f8f8;">0.5</div><div class="t" style="left:1144px;transform-origin:left top;top:77.74px;font-size:13.5px;color:#f8f8f8;font-family:'Liberation Mono',monospace;font-weight:400;transform:scaleX(0.85);-webkit-text-stroke:0.45px #f8f8f8;">1</div><div class="t" style="right:1121.5px;transform-origin:right top;top:110.74px;font-size:13.5px;color:#a9abb0;font-family:'Liberation Mono',monospace;font-weight:400;transform:scaleX(0.85);-webkit-text-stroke:0.35px currentColor;">3</div><div class="t" style="left:44px;transform-origin:left top;top:110.74px;font-size:13.5px;color:#f8f8f8;font-family:'Liberation Mono',monospace;font-weight:400;transform:scaleX(0.85);-webkit-text-stroke:0.45px #f8f8f8;">1203824585</div><div class="t" style="left:144px;transform-origin:left top;top:110.74px;font-size:13.5px;color:#f8f8f8;font-family:'Liberation Mono',monospace;font-weight:400;transform:scaleX(0.85);-webkit-text-stroke:0.45px #f8f8f8;">2015-07-01…</div><div class="t" style="left:244px;transform-origin:left top;top:110.74px;font-size:13.5px;color:#f8f8f8;font-family:'Liberation Mono',monospace;font-weight:400;transform:scaleX(0.85);-webkit-text-stroke:0.45px #f8f8f8;">2015-07-01…</div><div class="t" style="left:344px;transform-origin:left top;top:110.74px;font-size:13.5px;color:#f8f8f8;font-family:'Liberation Mono',monospace;font-weight:400;transform:scaleX(0.85);-webkit-text-stroke:0.45px #f8f8f8;">-73.968475…</div><div class="t" style="left:444px;transform-origin:left top;top:110.74px;font-size:13.5px;color:#f8f8f8;font-family:'Liberation Mono',monospace;font-weight:400;transform:scaleX(0.85);-webkit-text-stroke:0.45px #f8f8f8;">40.7550621…</div><div class="t" style="left:544px;transform-origin:left top;top:110.74px;font-size:13.5px;color:#f8f8f8;font-family:'Liberation Mono',monospace;font-weight:400;transform:scaleX(0.85);-webkit-text-stroke:0.45px #f8f8f8;">-73.990722…</div><div class="t" style="left:644px;transform-origin:left top;top:110.74px;font-size:13.5px;color:#f8f8f8;font-family:'Liberation Mono',monospace;font-weight:400;transform:scaleX(0.85);-webkit-text-stroke:0.45px #f8f8f8;">40.7508049…</div><div class="t" style="left:744px;transform-origin:left top;top:110.74px;font-size:13.5px;color:#f8f8f8;font-family:'Liberation Mono',monospace;font-weight:400;transform:scaleX(0.85);-webkit-text-stroke:0.45px #f8f8f8;">6</div><div class="t" style="left:844px;transform-origin:left top;top:110.74px;font-size:13.5px;color:#f8f8f8;font-family:'Liberation Mono',monospace;font-weight:400;transform:scaleX(0.85);-webkit-text-stroke:0.45px #f8f8f8;">1.71</div><div class="t" style="left:944px;transform-origin:left top;top:110.74px;font-size:13.5px;color:#f8f8f8;font-family:'Liberation Mono',monospace;font-weight:400;transform:scaleX(0.85);-webkit-text-stroke:0.45px #f8f8f8;">8.5</div><div class="t" style="left:1044px;transform-origin:left top;top:110.74px;font-size:13.5px;color:#f8f8f8;font-family:'Liberation Mono',monospace;font-weight:400;transform:scaleX(0.85);-webkit-text-stroke:0.45px #f8f8f8;">0.5</div><div class="t" style="left:1144px;transform-origin:left top;top:110.74px;font-size:13.5px;color:#f8f8f8;font-family:'Liberation Mono',monospace;font-weight:400;transform:scaleX(0.85);-webkit-text-stroke:0.45px #f8f8f8;">1</div><div class="t" style="right:1121.5px;transform-origin:right top;top:143.74px;font-size:13.5px;color:#a9abb0;font-family:'Liberation Mono',monospace;font-weight:400;transform:scaleX(0.85);-webkit-text-stroke:0.35px currentColor;">4</div><div class="t" style="left:44px;transform-origin:left top;top:143.74px;font-size:13.5px;color:#f8f8f8;font-family:'Liberation Mono',monospace;font-weight:400;transform:scaleX(0.85);-webkit-text-stroke:0.45px #f8f8f8;">1201023459</div><div class="t" style="left:144px;transform-origin:left top;top:143.74px;font-size:13.5px;color:#f8f8f8;font-family:'Liberation Mono',monospace;font-weight:400;transform:scaleX(0.85);-webkit-text-stroke:0.45px #f8f8f8;">2015-07-01…</div><div class="t" style="left:244px;transform-origin:left top;top:143.74px;font-size:13.5px;color:#f8f8f8;font-family:'Liberation Mono',monospace;font-weight:400;transform:scaleX(0.85);-webkit-text-stroke:0.45px #f8f8f8;">2015-07-01…</div><div class="t" style="left:344px;transform-origin:left top;top:143.74px;font-size:13.5px;color:#f8f8f8;font-family:'Liberation Mono',monospace;font-weight:400;transform:scaleX(0.85);-webkit-text-stroke:0.45px #f8f8f8;">-73.985557…</div><div class="t" style="left:444px;transform-origin:left top;top:143.74px;font-size:13.5px;color:#f8f8f8;font-family:'Liberation Mono',monospace;font-weight:400;transform:scaleX(0.85);-webkit-text-stroke:0.45px #f8f8f8;">40.7555389…</div><div class="t" style="left:544px;transform-origin:left top;top:143.74px;font-size:13.5px;color:#f8f8f8;font-family:'Liberation Mono',monospace;font-weight:400;transform:scaleX(0.85);-webkit-text-stroke:0.45px #f8f8f8;">-73.973731…</div><div class="t" style="left:644px;transform-origin:left top;top:143.74px;font-size:13.5px;color:#f8f8f8;font-family:'Liberation Mono',monospace;font-weight:400;transform:scaleX(0.85);-webkit-text-stroke:0.45px #f8f8f8;">40.7503089…</div><div class="t" style="left:744px;transform-origin:left top;top:143.74px;font-size:13.5px;color:#f8f8f8;font-family:'Liberation Mono',monospace;font-weight:400;transform:scaleX(0.85);-webkit-text-stroke:0.45px #f8f8f8;">1</div><div class="t" style="left:844px;transform-origin:left top;top:143.74px;font-size:13.5px;color:#f8f8f8;font-family:'Liberation Mono',monospace;font-weight:400;transform:scaleX(0.85);-webkit-text-stroke:0.45px #f8f8f8;">0.77</div><div class="t" style="left:944px;transform-origin:left top;top:143.74px;font-size:13.5px;color:#f8f8f8;font-family:'Liberation Mono',monospace;font-weight:400;transform:scaleX(0.85);-webkit-text-stroke:0.45px #f8f8f8;">5</div><div class="t" style="left:1044px;transform-origin:left top;top:143.74px;font-size:13.5px;color:#f8f8f8;font-family:'Liberation Mono',monospace;font-weight:400;transform:scaleX(0.85);-webkit-text-stroke:0.45px #f8f8f8;">0.5</div><div class="t" style="left:1144px;transform-origin:left top;top:143.74px;font-size:13.5px;color:#f8f8f8;font-family:'Liberation Mono',monospace;font-weight:400;transform:scaleX(0.85);-webkit-text-stroke:0.45px #f8f8f8;">0</div><div class="t" style="right:1121.5px;transform-origin:right top;top:176.74px;font-size:13.5px;color:#a9abb0;font-family:'Liberation Mono',monospace;font-weight:400;transform:scaleX(0.85);-webkit-text-stroke:0.35px currentColor;">5</div><div class="t" style="left:44px;transform-origin:left top;top:176.74px;font-size:13.5px;color:#f8f8f8;font-family:'Liberation Mono',monospace;font-weight:400;transform:scaleX(0.85);-webkit-text-stroke:0.45px #f8f8f8;">1200131637</div><div class="t" style="left:144px;transform-origin:left top;top:176.74px;font-size:13.5px;color:#f8f8f8;font-family:'Liberation Mono',monospace;font-weight:400;transform:scaleX(0.85);-webkit-text-stroke:0.45px #f8f8f8;">2015-07-01…</div><div class="t" style="left:244px;transform-origin:left top;top:176.74px;font-size:13.5px;color:#f8f8f8;font-family:'Liberation Mono',monospace;font-weight:400;transform:scaleX(0.85);-webkit-text-stroke:0.45px #f8f8f8;">2015-07-01…</div><div class="t" style="left:344px;transform-origin:left top;top:176.74px;font-size:13.5px;color:#f8f8f8;font-family:'Liberation Mono',monospace;font-weight:400;transform:scaleX(0.85);-webkit-text-stroke:0.45px #f8f8f8;">-73.993560…</div><div class="t" style="left:444px;transform-origin:left top;top:176.74px;font-size:13.5px;color:#f8f8f8;font-family:'Liberation Mono',monospace;font-weight:400;transform:scaleX(0.85);-webkit-text-stroke:0.45px #f8f8f8;">40.7519035…</div><div class="t" style="left:544px;transform-origin:left top;top:176.74px;font-size:13.5px;color:#f8f8f8;font-family:'Liberation Mono',monospace;font-weight:400;transform:scaleX(0.85);-webkit-text-stroke:0.45px #f8f8f8;">-73.966697…</div><div class="t" style="left:644px;transform-origin:left top;top:176.74px;font-size:13.5px;color:#f8f8f8;font-family:'Liberation Mono',monospace;font-weight:400;transform:scaleX(0.85);-webkit-text-stroke:0.45px #f8f8f8;">40.7934875…</div><div class="t" style="left:744px;transform-origin:left top;top:176.74px;font-size:13.5px;color:#f8f8f8;font-family:'Liberation Mono',monospace;font-weight:400;transform:scaleX(0.85);-webkit-text-stroke:0.45px #f8f8f8;">5</div><div class="t" style="left:844px;transform-origin:left top;top:176.74px;font-size:13.5px;color:#f8f8f8;font-family:'Liberation Mono',monospace;font-weight:400;transform:scaleX(0.85);-webkit-text-stroke:0.45px #f8f8f8;">3.58</div><div class="t" style="left:944px;transform-origin:left top;top:176.74px;font-size:13.5px;color:#f8f8f8;font-family:'Liberation Mono',monospace;font-weight:400;transform:scaleX(0.85);-webkit-text-stroke:0.45px #f8f8f8;">14</div><div class="t" style="left:1044px;transform-origin:left top;top:176.74px;font-size:13.5px;color:#f8f8f8;font-family:'Liberation Mono',monospace;font-weight:400;transform:scaleX(0.85);-webkit-text-stroke:0.45px #f8f8f8;">0.5</div><div class="t" style="left:1144px;transform-origin:left top;top:176.74px;font-size:13.5px;color:#f8f8f8;font-family:'Liberation Mono',monospace;font-weight:400;transform:scaleX(0.85);-webkit-text-stroke:0.45px #f8f8f8;">0</div><div class="t" style="right:1121.5px;transform-origin:right top;top:209.74px;font-size:13.5px;color:#a9abb0;font-family:'Liberation Mono',monospace;font-weight:400;transform:scaleX(0.85);-webkit-text-stroke:0.35px currentColor;">6</div><div class="t" style="left:44px;transform-origin:left top;top:209.74px;font-size:13.5px;color:#f8f8f8;font-family:'Liberation Mono',monospace;font-weight:400;transform:scaleX(0.85);-webkit-text-stroke:0.45px #f8f8f8;">1201475277</div><div class="t" style="left:144px;transform-origin:left top;top:209.74px;font-size:13.5px;color:#f8f8f8;font-family:'Liberation Mono',monospace;font-weight:400;transform:scaleX(0.85);-webkit-text-stroke:0.45px #f8f8f8;">2015-07-01…</div><div class="t" style="left:244px;transform-origin:left top;top:209.74px;font-size:13.5px;color:#f8f8f8;font-family:'Liberation Mono',monospace;font-weight:400;transform:scaleX(0.85);-webkit-text-stroke:0.45px #f8f8f8;">2015-07-01…</div><div class="t" style="left:344px;transform-origin:left top;top:209.74px;font-size:13.5px;color:#f8f8f8;font-family:'Liberation Mono',monospace;font-weight:400;transform:scaleX(0.85);-webkit-text-stroke:0.45px #f8f8f8;">-73.967247…</div><div class="t" style="left:444px;transform-origin:left top;top:209.74px;font-size:13.5px;color:#f8f8f8;font-family:'Liberation Mono',monospace;font-weight:400;transform:scaleX(0.85);-webkit-text-stroke:0.45px #f8f8f8;">40.7666320…</div><div class="t" style="left:544px;transform-origin:left top;top:209.74px;font-size:13.5px;color:#f8f8f8;font-family:'Liberation Mono',monospace;font-weight:400;transform:scaleX(0.85);-webkit-text-stroke:0.45px #f8f8f8;">-74.005554…</div><div class="t" style="left:644px;transform-origin:left top;top:209.74px;font-size:13.5px;color:#f8f8f8;font-family:'Liberation Mono',monospace;font-weight:400;transform:scaleX(0.85);-webkit-text-stroke:0.45px #f8f8f8;">40.7256050…</div><div class="t" style="left:744px;transform-origin:left top;top:209.74px;font-size:13.5px;color:#f8f8f8;font-family:'Liberation Mono',monospace;font-weight:400;transform:scaleX(0.85);-webkit-text-stroke:0.45px #f8f8f8;">1</div><div class="t" style="left:844px;transform-origin:left top;top:209.74px;font-size:13.5px;color:#f8f8f8;font-family:'Liberation Mono',monospace;font-weight:400;transform:scaleX(0.85);-webkit-text-stroke:0.45px #f8f8f8;">3.9</div><div class="t" style="left:944px;transform-origin:left top;top:209.74px;font-size:13.5px;color:#f8f8f8;font-family:'Liberation Mono',monospace;font-weight:400;transform:scaleX(0.85);-webkit-text-stroke:0.45px #f8f8f8;">15.5</div><div class="t" style="left:1044px;transform-origin:left top;top:209.74px;font-size:13.5px;color:#f8f8f8;font-family:'Liberation Mono',monospace;font-weight:400;transform:scaleX(0.85);-webkit-text-stroke:0.45px #f8f8f8;">0.5</div><div class="t" style="left:1144px;transform-origin:left top;top:209.74px;font-size:13.5px;color:#f8f8f8;font-family:'Liberation Mono',monospace;font-weight:400;transform:scaleX(0.85);-webkit-text-stroke:0.45px #f8f8f8;">0</div><div class="t" style="right:1121.5px;transform-origin:right top;top:242.74px;font-size:13.5px;color:#a9abb0;font-family:'Liberation Mono',monospace;font-weight:400;transform:scaleX(0.85);-webkit-text-stroke:0.35px currentColor;">7</div><div class="t" style="left:44px;transform-origin:left top;top:242.74px;font-size:13.5px;color:#f8f8f8;font-family:'Liberation Mono',monospace;font-weight:400;transform:scaleX(0.85);-webkit-text-stroke:0.45px #f8f8f8;">1202210497</div><div class="t" style="left:144px;transform-origin:left top;top:242.74px;font-size:13.5px;color:#f8f8f8;font-family:'Liberation Mono',monospace;font-weight:400;transform:scaleX(0.85);-webkit-text-stroke:0.45px #f8f8f8;">2015-07-01…</div><div class="t" style="left:244px;transform-origin:left top;top:242.74px;font-size:13.5px;color:#f8f8f8;font-family:'Liberation Mono',monospace;font-weight:400;transform:scaleX(0.85);-webkit-text-stroke:0.45px #f8f8f8;">2015-07-01…</div><div class="t" style="left:344px;transform-origin:left top;top:242.74px;font-size:13.5px;color:#f8f8f8;font-family:'Liberation Mono',monospace;font-weight:400;transform:scaleX(0.85);-webkit-text-stroke:0.45px #f8f8f8;">-73.953636…</div><div class="t" style="left:444px;transform-origin:left top;top:242.74px;font-size:13.5px;color:#f8f8f8;font-family:'Liberation Mono',monospace;font-weight:400;transform:scaleX(0.85);-webkit-text-stroke:0.45px #f8f8f8;">40.7796478…</div><div class="t" style="left:544px;transform-origin:left top;top:242.74px;font-size:13.5px;color:#f8f8f8;font-family:'Liberation Mono',monospace;font-weight:400;transform:scaleX(0.85);-webkit-text-stroke:0.45px #f8f8f8;">-73.951255…</div><div class="t" style="left:644px;transform-origin:left top;top:242.74px;font-size:13.5px;color:#f8f8f8;font-family:'Liberation Mono',monospace;font-weight:400;transform:scaleX(0.85);-webkit-text-stroke:0.45px #f8f8f8;">40.8027153…</div><div class="t" style="left:744px;transform-origin:left top;top:242.74px;font-size:13.5px;color:#f8f8f8;font-family:'Liberation Mono',monospace;font-weight:400;transform:scaleX(0.85);-webkit-text-stroke:0.45px #f8f8f8;">2</div><div class="t" style="left:844px;transform-origin:left top;top:242.74px;font-size:13.5px;color:#f8f8f8;font-family:'Liberation Mono',monospace;font-weight:400;transform:scaleX(0.85);-webkit-text-stroke:0.45px #f8f8f8;">2.1</div><div class="t" style="left:944px;transform-origin:left top;top:242.74px;font-size:13.5px;color:#f8f8f8;font-family:'Liberation Mono',monospace;font-weight:400;transform:scaleX(0.85);-webkit-text-stroke:0.45px #f8f8f8;">8.5</div><div class="t" style="left:1044px;transform-origin:left top;top:242.74px;font-size:13.5px;color:#f8f8f8;font-family:'Liberation Mono',monospace;font-weight:400;transform:scaleX(0.85);-webkit-text-stroke:0.45px #f8f8f8;">0.5</div><div class="t" style="left:1144px;transform-origin:left top;top:242.74px;font-size:13.5px;color:#f8f8f8;font-family:'Liberation Mono',monospace;font-weight:400;transform:scaleX(0.85);-webkit-text-stroke:0.45px #f8f8f8;">0</div><div class="t" style="right:1121.5px;transform-origin:right top;top:275.74px;font-size:13.5px;color:#a9abb0;font-family:'Liberation Mono',monospace;font-weight:400;transform:scaleX(0.85);-webkit-text-stroke:0.35px currentColor;">8</div><div class="t" style="left:44px;transform-origin:left top;top:275.74px;font-size:13.5px;color:#f8f8f8;font-family:'Liberation Mono',monospace;font-weight:400;transform:scaleX(0.85);-webkit-text-stroke:0.45px #f8f8f8;">1202944231</div><div class="t" style="left:144px;transform-origin:left top;top:275.74px;font-size:13.5px;color:#f8f8f8;font-family:'Liberation Mono',monospace;font-weight:400;transform:scaleX(0.85);-webkit-text-stroke:0.45px #f8f8f8;">2015-07-01…</div><div class="t" style="left:244px;transform-origin:left top;top:275.74px;font-size:13.5px;color:#f8f8f8;font-family:'Liberation Mono',monospace;font-weight:400;transform:scaleX(0.85);-webkit-text-stroke:0.45px #f8f8f8;">2015-07-01…</div><div class="t" style="left:344px;transform-origin:left top;top:275.74px;font-size:13.5px;color:#f8f8f8;font-family:'Liberation Mono',monospace;font-weight:400;transform:scaleX(0.85);-webkit-text-stroke:0.45px #f8f8f8;">-74.006195…</div><div class="t" style="left:444px;transform-origin:left top;top:275.74px;font-size:13.5px;color:#f8f8f8;font-family:'Liberation Mono',monospace;font-weight:400;transform:scaleX(0.85);-webkit-text-stroke:0.45px #f8f8f8;">40.7404174…</div><div class="t" style="left:544px;transform-origin:left top;top:275.74px;font-size:13.5px;color:#f8f8f8;font-family:'Liberation Mono',monospace;font-weight:400;transform:scaleX(0.85);-webkit-text-stroke:0.45px #f8f8f8;">-74.005737…</div><div class="t" style="left:644px;transform-origin:left top;top:275.74px;font-size:13.5px;color:#f8f8f8;font-family:'Liberation Mono',monospace;font-weight:400;transform:scaleX(0.85);-webkit-text-stroke:0.45px #f8f8f8;">40.7110290…</div><div class="t" style="left:744px;transform-origin:left top;top:275.74px;font-size:13.5px;color:#f8f8f8;font-family:'Liberation Mono',monospace;font-weight:400;transform:scaleX(0.85);-webkit-text-stroke:0.45px #f8f8f8;">1</div><div class="t" style="left:844px;transform-origin:left top;top:275.74px;font-size:13.5px;color:#f8f8f8;font-family:'Liberation Mono',monospace;font-weight:400;transform:scaleX(0.85);-webkit-text-stroke:0.45px #f8f8f8;">2.57</div><div class="t" style="left:944px;transform-origin:left top;top:275.74px;font-size:13.5px;color:#f8f8f8;font-family:'Liberation Mono',monospace;font-weight:400;transform:scaleX(0.85);-webkit-text-stroke:0.45px #f8f8f8;">11.5</div><div class="t" style="left:1044px;transform-origin:left top;top:275.74px;font-size:13.5px;color:#f8f8f8;font-family:'Liberation Mono',monospace;font-weight:400;transform:scaleX(0.85);-webkit-text-stroke:0.45px #f8f8f8;">0.5</div><div class="t" style="left:1144px;transform-origin:left top;top:275.74px;font-size:13.5px;color:#f8f8f8;font-family:'Liberation Mono',monospace;font-weight:400;transform:scaleX(0.85);-webkit-text-stroke:0.45px #f8f8f8;">2</div><div class="t" style="right:1121.5px;transform-origin:right top;top:308.74px;font-size:13.5px;color:#a9abb0;font-family:'Liberation Mono',monospace;font-weight:400;transform:scaleX(0.85);-webkit-text-stroke:0.35px currentColor;">9</div><div class="t" style="left:44px;transform-origin:left top;top:308.74px;font-size:13.5px;color:#f8f8f8;font-family:'Liberation Mono',monospace;font-weight:400;transform:scaleX(0.85);-webkit-text-stroke:0.45px #f8f8f8;">1202628300</div><div class="t" style="left:144px;transform-origin:left top;top:308.74px;font-size:13.5px;color:#f8f8f8;font-family:'Liberation Mono',monospace;font-weight:400;transform:scaleX(0.85);-webkit-text-stroke:0.45px #f8f8f8;">2015-07-01…</div><div class="t" style="left:244px;transform-origin:left top;top:308.74px;font-size:13.5px;color:#f8f8f8;font-family:'Liberation Mono',monospace;font-weight:400;transform:scaleX(0.85);-webkit-text-stroke:0.45px #f8f8f8;">2015-07-01…</div><div class="t" style="left:344px;transform-origin:left top;top:308.74px;font-size:13.5px;color:#f8f8f8;font-family:'Liberation Mono',monospace;font-weight:400;transform:scaleX(0.85);-webkit-text-stroke:0.45px #f8f8f8;">-73.988693…</div><div class="t" style="left:444px;transform-origin:left top;top:308.74px;font-size:13.5px;color:#f8f8f8;font-family:'Liberation Mono',monospace;font-weight:400;transform:scaleX(0.85);-webkit-text-stroke:0.45px #f8f8f8;">40.7193908…</div><div class="t" style="left:544px;transform-origin:left top;top:308.74px;font-size:13.5px;color:#f8f8f8;font-family:'Liberation Mono',monospace;font-weight:400;transform:scaleX(0.85);-webkit-text-stroke:0.45px #f8f8f8;">-73.923751…</div><div class="t" style="left:644px;transform-origin:left top;top:308.74px;font-size:13.5px;color:#f8f8f8;font-family:'Liberation Mono',monospace;font-weight:400;transform:scaleX(0.85);-webkit-text-stroke:0.45px #f8f8f8;">40.6903305…</div><div class="t" style="left:744px;transform-origin:left top;top:308.74px;font-size:13.5px;color:#f8f8f8;font-family:'Liberation Mono',monospace;font-weight:400;transform:scaleX(0.85);-webkit-text-stroke:0.45px #f8f8f8;">1</div><div class="t" style="left:844px;transform-origin:left top;top:308.74px;font-size:13.5px;color:#f8f8f8;font-family:'Liberation Mono',monospace;font-weight:400;transform:scaleX(0.85);-webkit-text-stroke:0.45px #f8f8f8;">4</div><div class="t" style="left:944px;transform-origin:left top;top:308.74px;font-size:13.5px;color:#f8f8f8;font-family:'Liberation Mono',monospace;font-weight:400;transform:scaleX(0.85);-webkit-text-stroke:0.45px #f8f8f8;">14.5</div><div class="t" style="left:1044px;transform-origin:left top;top:308.74px;font-size:13.5px;color:#f8f8f8;font-family:'Liberation Mono',monospace;font-weight:400;transform:scaleX(0.85);-webkit-text-stroke:0.45px #f8f8f8;">0.5</div><div class="t" style="left:1144px;transform-origin:left top;top:308.74px;font-size:13.5px;color:#f8f8f8;font-family:'Liberation Mono',monospace;font-weight:400;transform:scaleX(0.85);-webkit-text-stroke:0.45px #f8f8f8;">3</div><div class="t" style="right:1121.5px;transform-origin:right top;top:341.74px;font-size:13.5px;color:#a9abb0;font-family:'Liberation Mono',monospace;font-weight:400;transform:scaleX(0.85);-webkit-text-stroke:0.35px currentColor;">10</div><div class="t" style="left:44px;transform-origin:left top;top:341.74px;font-size:13.5px;color:#f8f8f8;font-family:'Liberation Mono',monospace;font-weight:400;transform:scaleX(0.85);-webkit-text-stroke:0.45px #f8f8f8;">1200425150</div><div class="t" style="left:144px;transform-origin:left top;top:341.74px;font-size:13.5px;color:#f8f8f8;font-family:'Liberation Mono',monospace;font-weight:400;transform:scaleX(0.85);-webkit-text-stroke:0.45px #f8f8f8;">2015-07-01…</div><div class="t" style="left:244px;transform-origin:left top;top:341.74px;font-size:13.5px;color:#f8f8f8;font-family:'Liberation Mono',monospace;font-weight:400;transform:scaleX(0.85);-webkit-text-stroke:0.45px #f8f8f8;">2015-07-01…</div><div class="t" style="left:344px;transform-origin:left top;top:341.74px;font-size:13.5px;color:#f8f8f8;font-family:'Liberation Mono',monospace;font-weight:400;transform:scaleX(0.85);-webkit-text-stroke:0.45px #f8f8f8;">-73.983413…</div><div class="t" style="left:444px;transform-origin:left top;top:341.74px;font-size:13.5px;color:#f8f8f8;font-family:'Liberation Mono',monospace;font-weight:400;transform:scaleX(0.85);-webkit-text-stroke:0.45px #f8f8f8;">40.7655448…</div><div class="t" style="left:544px;transform-origin:left top;top:341.74px;font-size:13.5px;color:#f8f8f8;font-family:'Liberation Mono',monospace;font-weight:400;transform:scaleX(0.85);-webkit-text-stroke:0.45px #f8f8f8;">-73.965904…</div><div class="t" style="left:644px;transform-origin:left top;top:341.74px;font-size:13.5px;color:#f8f8f8;font-family:'Liberation Mono',monospace;font-weight:400;transform:scaleX(0.85);-webkit-text-stroke:0.45px #f8f8f8;">40.8005867…</div><div class="t" style="left:744px;transform-origin:left top;top:341.74px;font-size:13.5px;color:#f8f8f8;font-family:'Liberation Mono',monospace;font-weight:400;transform:scaleX(0.85);-webkit-text-stroke:0.45px #f8f8f8;">5</div><div class="t" style="left:844px;transform-origin:left top;top:341.74px;font-size:13.5px;color:#f8f8f8;font-family:'Liberation Mono',monospace;font-weight:400;transform:scaleX(0.85);-webkit-text-stroke:0.45px #f8f8f8;">3.17</div><div class="t" style="left:944px;transform-origin:left top;top:341.74px;font-size:13.5px;color:#f8f8f8;font-family:'Liberation Mono',monospace;font-weight:400;transform:scaleX(0.85);-webkit-text-stroke:0.45px #f8f8f8;">14.5</div><div class="t" style="left:1044px;transform-origin:left top;top:341.74px;font-size:13.5px;color:#f8f8f8;font-family:'Liberation Mono',monospace;font-weight:400;transform:scaleX(0.85);-webkit-text-stroke:0.45px #f8f8f8;">0.5</div><div class="t" style="left:1144px;transform-origin:left top;top:341.74px;font-size:13.5px;color:#f8f8f8;font-family:'Liberation Mono',monospace;font-weight:400;transform:scaleX(0.85);-webkit-text-stroke:0.45px #f8f8f8;">3</div><div class="t" style="right:1121.5px;transform-origin:right top;top:374.74px;font-size:13.5px;color:#a9abb0;font-family:'Liberation Mono',monospace;font-weight:400;transform:scaleX(0.85);-webkit-text-stroke:0.35px currentColor;">11</div><div class="t" style="left:44px;transform-origin:left top;top:374.74px;font-size:13.5px;color:#f8f8f8;font-family:'Liberation Mono',monospace;font-weight:400;transform:scaleX(0.85);-webkit-text-stroke:0.45px #f8f8f8;">1201746944</div><div class="t" style="left:144px;transform-origin:left top;top:374.74px;font-size:13.5px;color:#f8f8f8;font-family:'Liberation Mono',monospace;font-weight:400;transform:scaleX(0.85);-webkit-text-stroke:0.45px #f8f8f8;">2015-07-01…</div><div class="t" style="left:244px;transform-origin:left top;top:374.74px;font-size:13.5px;color:#f8f8f8;font-family:'Liberation Mono',monospace;font-weight:400;transform:scaleX(0.85);-webkit-text-stroke:0.45px #f8f8f8;">2015-07-01…</div><div class="t" style="left:344px;transform-origin:left top;top:374.74px;font-size:13.5px;color:#f8f8f8;font-family:'Liberation Mono',monospace;font-weight:400;transform:scaleX(0.85);-webkit-text-stroke:0.45px #f8f8f8;">-73.978736…</div><div class="t" style="left:444px;transform-origin:left top;top:374.74px;font-size:13.5px;color:#f8f8f8;font-family:'Liberation Mono',monospace;font-weight:400;transform:scaleX(0.85);-webkit-text-stroke:0.45px #f8f8f8;">40.7876586…</div><div class="t" style="left:544px;transform-origin:left top;top:374.74px;font-size:13.5px;color:#f8f8f8;font-family:'Liberation Mono',monospace;font-weight:400;transform:scaleX(0.85);-webkit-text-stroke:0.45px #f8f8f8;">-73.965621…</div><div class="t" style="left:644px;transform-origin:left top;top:374.74px;font-size:13.5px;color:#f8f8f8;font-family:'Liberation Mono',monospace;font-weight:400;transform:scaleX(0.85);-webkit-text-stroke:0.45px #f8f8f8;">40.8079299…</div><div class="t" style="left:744px;transform-origin:left top;top:374.74px;font-size:13.5px;color:#f8f8f8;font-family:'Liberation Mono',monospace;font-weight:400;transform:scaleX(0.85);-webkit-text-stroke:0.45px #f8f8f8;">1</div><div class="t" style="left:844px;transform-origin:left top;top:374.74px;font-size:13.5px;color:#f8f8f8;font-family:'Liberation Mono',monospace;font-weight:400;transform:scaleX(0.85);-webkit-text-stroke:0.45px #f8f8f8;">1.78</div><div class="t" style="left:944px;transform-origin:left top;top:374.74px;font-size:13.5px;color:#f8f8f8;font-family:'Liberation Mono',monospace;font-weight:400;transform:scaleX(0.85);-webkit-text-stroke:0.45px #f8f8f8;">8.5</div><div class="t" style="left:1044px;transform-origin:left top;top:374.74px;font-size:13.5px;color:#f8f8f8;font-family:'Liberation Mono',monospace;font-weight:400;transform:scaleX(0.85);-webkit-text-stroke:0.45px #f8f8f8;">0.5</div><div class="t" style="left:1144px;transform-origin:left top;top:374.74px;font-size:13.5px;color:#f8f8f8;font-family:'Liberation Mono',monospace;font-weight:400;transform:scaleX(0.85);-webkit-text-stroke:0.45px #f8f8f8;">1</div><div class="t" style="right:1121.5px;transform-origin:right top;top:407.74px;font-size:13.5px;color:#a9abb0;font-family:'Liberation Mono',monospace;font-weight:400;transform:scaleX(0.85);-webkit-text-stroke:0.35px currentColor;">12</div><div class="t" style="left:44px;transform-origin:left top;top:407.74px;font-size:13.5px;color:#f8f8f8;font-family:'Liberation Mono',monospace;font-weight:400;transform:scaleX(0.85);-webkit-text-stroke:0.45px #f8f8f8;">1200436613</div><div class="t" style="left:144px;transform-origin:left top;top:407.74px;font-size:13.5px;color:#f8f8f8;font-family:'Liberation Mono',monospace;font-weight:400;transform:scaleX(0.85);-webkit-text-stroke:0.45px #f8f8f8;">2015-07-01…</div><div class="t" style="left:244px;transform-origin:left top;top:407.74px;font-size:13.5px;color:#f8f8f8;font-family:'Liberation Mono',monospace;font-weight:400;transform:scaleX(0.85);-webkit-text-stroke:0.45px #f8f8f8;">2015-07-01…</div><div class="t" style="left:344px;transform-origin:left top;top:407.74px;font-size:13.5px;color:#f8f8f8;font-family:'Liberation Mono',monospace;font-weight:400;transform:scaleX(0.85);-webkit-text-stroke:0.45px #f8f8f8;">-73.987869…</div><div class="t" style="left:444px;transform-origin:left top;top:407.74px;font-size:13.5px;color:#f8f8f8;font-family:'Liberation Mono',monospace;font-weight:400;transform:scaleX(0.85);-webkit-text-stroke:0.45px #f8f8f8;">40.7210121…</div><div class="t" style="left:544px;transform-origin:left top;top:407.74px;font-size:13.5px;color:#f8f8f8;font-family:'Liberation Mono',monospace;font-weight:400;transform:scaleX(0.85);-webkit-text-stroke:0.45px #f8f8f8;">-73.984283…</div><div class="t" style="left:644px;transform-origin:left top;top:407.74px;font-size:13.5px;color:#f8f8f8;font-family:'Liberation Mono',monospace;font-weight:400;transform:scaleX(0.85);-webkit-text-stroke:0.45px #f8f8f8;">40.7288284…</div><div class="t" style="left:744px;transform-origin:left top;top:407.74px;font-size:13.5px;color:#f8f8f8;font-family:'Liberation Mono',monospace;font-weight:400;transform:scaleX(0.85);-webkit-text-stroke:0.45px #f8f8f8;">1</div><div class="t" style="left:844px;transform-origin:left top;top:407.74px;font-size:13.5px;color:#f8f8f8;font-family:'Liberation Mono',monospace;font-weight:400;transform:scaleX(0.85);-webkit-text-stroke:0.45px #f8f8f8;">0.8</div><div class="t" style="left:944px;transform-origin:left top;top:407.74px;font-size:13.5px;color:#f8f8f8;font-family:'Liberation Mono',monospace;font-weight:400;transform:scaleX(0.85);-webkit-text-stroke:0.45px #f8f8f8;">5.5</div><div class="t" style="left:1044px;transform-origin:left top;top:407.74px;font-size:13.5px;color:#f8f8f8;font-family:'Liberation Mono',monospace;font-weight:400;transform:scaleX(0.85);-webkit-text-stroke:0.45px #f8f8f8;">0.5</div><div class="t" style="left:1144px;transform-origin:left top;top:407.74px;font-size:13.5px;color:#f8f8f8;font-family:'Liberation Mono',monospace;font-weight:400;transform:scaleX(0.85);-webkit-text-stroke:0.45px #f8f8f8;">1</div><div class="t" style="right:1121.5px;transform-origin:right top;top:440.74px;font-size:13.5px;color:#a9abb0;font-family:'Liberation Mono',monospace;font-weight:400;transform:scaleX(0.85);-webkit-text-stroke:0.35px currentColor;">13</div><div class="t" style="left:44px;transform-origin:left top;top:440.74px;font-size:13.5px;color:#f8f8f8;font-family:'Liberation Mono',monospace;font-weight:400;transform:scaleX(0.85);-webkit-text-stroke:0.45px #f8f8f8;">1200864931</div><div class="t" style="left:144px;transform-origin:left top;top:440.74px;font-size:13.5px;color:#f8f8f8;font-family:'Liberation Mono',monospace;font-weight:400;transform:scaleX(0.85);-webkit-text-stroke:0.45px #f8f8f8;">2015-07-01…</div><div class="t" style="left:244px;transform-origin:left top;top:440.74px;font-size:13.5px;color:#f8f8f8;font-family:'Liberation Mono',monospace;font-weight:400;transform:scaleX(0.85);-webkit-text-stroke:0.45px #f8f8f8;">2015-07-01…</div><div class="t" style="left:344px;transform-origin:left top;top:440.74px;font-size:13.5px;color:#f8f8f8;font-family:'Liberation Mono',monospace;font-weight:400;transform:scaleX(0.85);-webkit-text-stroke:0.45px #f8f8f8;">-73.990463…</div><div class="t" style="left:444px;transform-origin:left top;top:440.74px;font-size:13.5px;color:#f8f8f8;font-family:'Liberation Mono',monospace;font-weight:400;transform:scaleX(0.85);-webkit-text-stroke:0.45px #f8f8f8;">40.7461166…</div><div class="t" style="left:544px;transform-origin:left top;top:440.74px;font-size:13.5px;color:#f8f8f8;font-family:'Liberation Mono',monospace;font-weight:400;transform:scaleX(0.85);-webkit-text-stroke:0.45px #f8f8f8;">-73.979187…</div><div class="t" style="left:644px;transform-origin:left top;top:440.74px;font-size:13.5px;color:#f8f8f8;font-family:'Liberation Mono',monospace;font-weight:400;transform:scaleX(0.85);-webkit-text-stroke:0.45px #f8f8f8;">40.7846755…</div><div class="t" style="left:744px;transform-origin:left top;top:440.74px;font-size:13.5px;color:#f8f8f8;font-family:'Liberation Mono',monospace;font-weight:400;transform:scaleX(0.85);-webkit-text-stroke:0.45px #f8f8f8;">5</div><div class="t" style="left:844px;transform-origin:left top;top:440.74px;font-size:13.5px;color:#f8f8f8;font-family:'Liberation Mono',monospace;font-weight:400;transform:scaleX(0.85);-webkit-text-stroke:0.45px #f8f8f8;">3.54</div><div class="t" style="left:944px;transform-origin:left top;top:440.74px;font-size:13.5px;color:#f8f8f8;font-family:'Liberation Mono',monospace;font-weight:400;transform:scaleX(0.85);-webkit-text-stroke:0.45px #f8f8f8;">13.5</div><div class="t" style="left:1044px;transform-origin:left top;top:440.74px;font-size:13.5px;color:#f8f8f8;font-family:'Liberation Mono',monospace;font-weight:400;transform:scaleX(0.85);-webkit-text-stroke:0.45px #f8f8f8;">0.5</div><div class="t" style="left:1144px;transform-origin:left top;top:440.74px;font-size:13.5px;color:#f8f8f8;font-family:'Liberation Mono',monospace;font-weight:400;transform:scaleX(0.85);-webkit-text-stroke:0.45px #f8f8f8;">1</div><div class="t" style="right:1121.5px;transform-origin:right top;top:473.74px;font-size:13.5px;color:#a9abb0;font-family:'Liberation Mono',monospace;font-weight:400;transform:scaleX(0.85);-webkit-text-stroke:0.35px currentColor;">14</div><div class="t" style="left:44px;transform-origin:left top;top:473.74px;font-size:13.5px;color:#f8f8f8;font-family:'Liberation Mono',monospace;font-weight:400;transform:scaleX(0.85);-webkit-text-stroke:0.45px #f8f8f8;">1202695666</div><div class="t" style="left:144px;transform-origin:left top;top:473.74px;font-size:13.5px;color:#f8f8f8;font-family:'Liberation Mono',monospace;font-weight:400;transform:scaleX(0.85);-webkit-text-stroke:0.45px #f8f8f8;">2015-07-01…</div><div class="t" style="left:244px;transform-origin:left top;top:473.74px;font-size:13.5px;color:#f8f8f8;font-family:'Liberation Mono',monospace;font-weight:400;transform:scaleX(0.85);-webkit-text-stroke:0.45px #f8f8f8;">2015-07-01…</div><div class="t" style="left:344px;transform-origin:left top;top:473.74px;font-size:13.5px;color:#f8f8f8;font-family:'Liberation Mono',monospace;font-weight:400;transform:scaleX(0.85);-webkit-text-stroke:0.45px #f8f8f8;">-73.979568…</div><div class="t" style="left:444px;transform-origin:left top;top:473.74px;font-size:13.5px;color:#f8f8f8;font-family:'Liberation Mono',monospace;font-weight:400;transform:scaleX(0.85);-webkit-text-stroke:0.45px #f8f8f8;">40.7593803…</div><div class="t" style="left:544px;transform-origin:left top;top:473.74px;font-size:13.5px;color:#f8f8f8;font-family:'Liberation Mono',monospace;font-weight:400;transform:scaleX(0.85);-webkit-text-stroke:0.45px #f8f8f8;">-74.007568…</div><div class="t" style="left:644px;transform-origin:left top;top:473.74px;font-size:13.5px;color:#f8f8f8;font-family:'Liberation Mono',monospace;font-weight:400;transform:scaleX(0.85);-webkit-text-stroke:0.45px #f8f8f8;">40.7253799…</div><div class="t" style="left:744px;transform-origin:left top;top:473.74px;font-size:13.5px;color:#f8f8f8;font-family:'Liberation Mono',monospace;font-weight:400;transform:scaleX(0.85);-webkit-text-stroke:0.45px #f8f8f8;">5</div><div class="t" style="left:844px;transform-origin:left top;top:473.74px;font-size:13.5px;color:#f8f8f8;font-family:'Liberation Mono',monospace;font-weight:400;transform:scaleX(0.85);-webkit-text-stroke:0.45px #f8f8f8;">3.6100001</div><div class="t" style="left:944px;transform-origin:left top;top:473.74px;font-size:13.5px;color:#f8f8f8;font-family:'Liberation Mono',monospace;font-weight:400;transform:scaleX(0.85);-webkit-text-stroke:0.45px #f8f8f8;">13.5</div><div class="t" style="left:1044px;transform-origin:left top;top:473.74px;font-size:13.5px;color:#f8f8f8;font-family:'Liberation Mono',monospace;font-weight:400;transform:scaleX(0.85);-webkit-text-stroke:0.45px #f8f8f8;">0.5</div><div class="t" style="left:1144px;transform-origin:left top;top:473.74px;font-size:13.5px;color:#f8f8f8;font-family:'Liberation Mono',monospace;font-weight:400;transform:scaleX(0.85);-webkit-text-stroke:0.45px #f8f8f8;">1</div><div class="t" style="right:1121.5px;transform-origin:right top;top:506.74px;font-size:13.5px;color:#a9abb0;font-family:'Liberation Mono',monospace;font-weight:400;transform:scaleX(0.85);-webkit-text-stroke:0.35px currentColor;">15</div><div class="t" style="left:44px;transform-origin:left top;top:506.74px;font-size:13.5px;color:#f8f8f8;font-family:'Liberation Mono',monospace;font-weight:400;transform:scaleX(0.85);-webkit-text-stroke:0.45px #f8f8f8;">1200842433</div><div class="t" style="left:144px;transform-origin:left top;top:506.74px;font-size:13.5px;color:#f8f8f8;font-family:'Liberation Mono',monospace;font-weight:400;transform:scaleX(0.85);-webkit-text-stroke:0.45px #f8f8f8;">2015-07-01…</div><div class="t" style="left:244px;transform-origin:left top;top:506.74px;font-size:13.5px;color:#f8f8f8;font-family:'Liberation Mono',monospace;font-weight:400;transform:scaleX(0.85);-webkit-text-stroke:0.45px #f8f8f8;">2015-07-01…</div><div class="t" style="left:344px;transform-origin:left top;top:506.74px;font-size:13.5px;color:#f8f8f8;font-family:'Liberation Mono',monospace;font-weight:400;transform:scaleX(0.85);-webkit-text-stroke:0.45px #f8f8f8;">-74.001434…</div><div class="t" style="left:444px;transform-origin:left top;top:506.74px;font-size:13.5px;color:#f8f8f8;font-family:'Liberation Mono',monospace;font-weight:400;transform:scaleX(0.85);-webkit-text-stroke:0.45px #f8f8f8;">40.7359352…</div><div class="t" style="left:544px;transform-origin:left top;top:506.74px;font-size:13.5px;color:#f8f8f8;font-family:'Liberation Mono',monospace;font-weight:400;transform:scaleX(0.85);-webkit-text-stroke:0.45px #f8f8f8;">-73.979843…</div><div class="t" style="left:644px;transform-origin:left top;top:506.74px;font-size:13.5px;color:#f8f8f8;font-family:'Liberation Mono',monospace;font-weight:400;transform:scaleX(0.85);-webkit-text-stroke:0.45px #f8f8f8;">40.7498435…</div><div class="t" style="left:744px;transform-origin:left top;top:506.74px;font-size:13.5px;color:#f8f8f8;font-family:'Liberation Mono',monospace;font-weight:400;transform:scaleX(0.85);-webkit-text-stroke:0.45px #f8f8f8;">2</div><div class="t" style="left:844px;transform-origin:left top;top:506.74px;font-size:13.5px;color:#f8f8f8;font-family:'Liberation Mono',monospace;font-weight:400;transform:scaleX(0.85);-webkit-text-stroke:0.45px #f8f8f8;">2</div><div class="t" style="left:944px;transform-origin:left top;top:506.74px;font-size:13.5px;color:#f8f8f8;font-family:'Liberation Mono',monospace;font-weight:400;transform:scaleX(0.85);-webkit-text-stroke:0.45px #f8f8f8;">9.5</div><div class="t" style="left:1044px;transform-origin:left top;top:506.74px;font-size:13.5px;color:#f8f8f8;font-family:'Liberation Mono',monospace;font-weight:400;transform:scaleX(0.85);-webkit-text-stroke:0.45px #f8f8f8;">0.5</div><div class="t" style="left:1144px;transform-origin:left top;top:506.74px;font-size:13.5px;color:#f8f8f8;font-family:'Liberation Mono',monospace;font-weight:400;transform:scaleX(0.85);-webkit-text-stroke:0.45px #f8f8f8;">1</div><div class="a" style="left:35px;top:33px;width:101px;height:34px;border:2px solid #faff69"></div></div><div class="a" style="left:1399px;top:270px;width:16px;height:512px;background:#1f1f1c"></div><div class="a" style="left:250px;top:798px;width:1165px;height:1px;background:#323232"></div><div class="t" style="left:266px;top:824.62px;font-size:12.8px;color:#b9b9b9;font-weight:400;font-family:'Liberation Sans',sans-serif;">100,000 rows</div><div class="a" style="left:709px;top:815px;width:32px;height:32px;background:#3e3e3e;border-radius:5px"></div><svg style="left:722.5px;top:828px;" width="5" height="7" viewBox="0 0 5 7" fill="none"><path d="M4.2 0.6L1 3.5L4.2 6.4" stroke="#8a8a8a" stroke-width="1.2" stroke-linecap="round" stroke-linejoin="round"/></svg><div class="a" style="left:745px;top:815px;width:50px;height:32px;background:#2c2c2c;border:1px solid #3a3a3a;border-radius:5px"></div><div class="t" style="left:758px;top:824.75px;font-size:15px;color:#fff;font-weight:400;font-family:'Liberation Sans',sans-serif;-webkit-text-stroke:0.2px #fff;">1</div><div class="t" style="left:799.5px;top:824.28px;font-size:13.2px;color:#c8c8c8;font-weight:400;font-family:'Liberation Sans',sans-serif;">of 2,000</div><svg style="left:864.5px;top:828px;" width="5" height="7" viewBox="0 0 5 7" fill="none"><path d="M0.8 0.6L4 3.5L0.8 6.4" stroke="#c8c8c8" stroke-width="1.2" stroke-linecap="round" stroke-linejoin="round"/></svg><div class="a" style="left:1249px;top:815px;width:150px;height:32px;background:#2c2c2c;border:1px solid #eef065;border-radius:5px"></div><div class="t" style="left:1262.5px;top:823.75px;font-size:15px;color:#fff;font-weight:400;font-family:'Liberation Sans',sans-serif;-webkit-text-stroke:0.15px #fff;">50 rows</div><svg style="left:1374.5px;top:824.5px;" width="7" height="12" viewBox="0 0 7 12" fill="none"><path d="M1 4L3.5 1.5L6 4M1 8L3.5 10.5L6 8" stroke="#cfcfcf" stroke-width="1.2" stroke-linecap="round" stroke-linejoin="round"/></svg><div class="a" style="left:1249px;top:664px;width:150px;height:146px;background:#282828;border:1px solid #363636;border-radius:5px"></div><div class="t" style="left:1266px;top:682.92px;font-size:14.8px;color:#fff;font-weight:400;font-family:'Liberation Sans',sans-serif;-webkit-text-stroke:0.15px #fff;">All rows</div><div class="t" style="left:1266px;top:714.92px;font-size:14.8px;color:#fff;font-weight:400;font-family:'Liberation Sans',sans-serif;-webkit-text-stroke:0.15px #fff;">250 rows</div><div class="t" style="left:1266px;top:746.92px;font-size:14.8px;color:#fff;font-weight:400;font-family:'Liberation Sans',sans-serif;-webkit-text-stroke:0.15px #fff;">100 rows</div><div class="t" style="left:1266px;top:778.92px;font-size:14.8px;color:#fff;font-weight:400;font-family:'Liberation Sans',sans-serif;-webkit-text-stroke:0.15px #fff;">50 rows</div><svg style="left:1370px;top:780.5px;" width="12.5" height="9" viewBox="0 0 12.5 9" fill="none"><path d="M0.8 4.6L4.3 8.1L11.7 0.8" stroke="#ffffff" stroke-width="1.4" stroke-linecap="round" stroke-linejoin="round"/></svg><svg style="left:0px;top:0px;left:0;top:0" width="1415" height="863" viewBox="0 0 1415 863" fill="none"><path d="M1107.5 770.5C1126 807 1162 825 1217 828.4" stroke="#f5f500" stroke-width="2" stroke-linecap="round"/><path d="M1227 828.4L1216.5 824.5L1217 832Z" fill="#f5f500" stroke="#f5f500" stroke-width="1" stroke-linejoin="round"/></svg></div></body></html>
